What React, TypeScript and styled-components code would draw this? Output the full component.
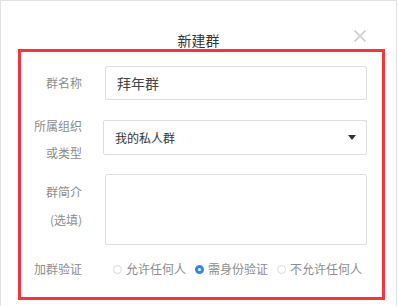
import styled, { createGlobalStyle } from 'styled-components';

const GlobalStyle = createGlobalStyle`
	html, body {
		margin: 0;
		padding: 0;
		background: #fff;
	}
	body {
		font-family: "Noto Sans CJK SC", "Noto Sans", sans-serif;
	}
`

const Modal = styled.div`
	box-sizing: border-box;
	width: 397px;
	height: 320px;
	border: 1px solid #e2e2e4;
	border-bottom: none;
	background: #fff;
`

const Header = styled.div`
	position: relative;
	height: 48px;
	padding-top: 26px;
	box-sizing: border-box;
	text-align: center;
`

const Title = styled.span`
	font-size: 14px;
	line-height: 20px;
	color: #333;
`

const Close = styled.button`
	position: absolute;
	top: 29px;
	right: 30px;
	width: 12px;
	height: 12px;
	padding: 0;
	border: none;
	background: none;
	display: flex;
	cursor: pointer;
`

const Form = styled.form`
	margin: 0 11px 0 17px;
	border: 3px solid #f5353b;
	padding: 0 15px 18px 0;
`

const Row = styled.div<{ $top: number; $align?: string }>`
	display: flex;
	align-items: ${p => p.$align || 'center'};
	margin-top: ${p => p.$top}px;
`

const Label = styled.div<{ $lh: number; $pt?: number }>`
	flex: 0 0 61px;
	margin-right: 23px;
	padding-top: ${p => p.$pt || 0}px;
	text-align: right;
	font-size: 12px;
	line-height: ${p => p.$lh}px;
	color: #8c8c8c;
`

const Field = styled.div`
	box-sizing: border-box;
	flex: 1;
	height: 34px;
	border: 1px solid #dedee2;
	border-radius: 2px;
	padding-left: 11px;
	display: flex;
	align-items: center;
`

const Input = styled.input`
	flex: 1;
	min-width: 0;
	margin: 0;
	padding: 0;
	border: none;
	background: transparent;
	font-family: inherit;
	font-size: 14px;
	color: #444;
	outline: none;
`

const Select = styled.div`
	box-sizing: border-box;
	flex: 1;
	height: 35px;
	margin: 8px 0 0 -2px;
	border: 1px solid #dedee2;
	border-radius: 2px;
	padding: 0 10px 0 11px;
	display: flex;
	align-items: center;
	justify-content: space-between;
	font-size: 12px;
	color: #333;
`

const TextArea = styled.textarea`
	box-sizing: border-box;
	flex: 1;
	height: 71px;
	margin: 0;
	border: 1px solid #dedee2;
	border-radius: 2px;
	resize: none;
	outline: none;
	font-family: inherit;
`

const RadioGroup = styled.div`
	display: flex;
	align-items: center;
	gap: 9px;
	padding-left: 8px;
`

const RadioItem = styled.label`
	display: flex;
	align-items: center;
	gap: 4px;
	font-size: 12px;
	line-height: 20px;
	color: #8c8c8c;
`

const Dot = styled.span<{ $on?: boolean }>`
	box-sizing: border-box;
	width: 9px;
	height: 9px;
	border-radius: 50%;
	border: ${p => (p.$on ? '3px solid #2f88ea' : '1px solid #dadada')};
	background: #fff;
`

const options = [
	{ label: '允许任何人', on: false },
	{ label: '需身份验证', on: true },
	{ label: '不允许任何人', on: false },
]

export default function App() {
	return (
		<>
			<GlobalStyle />
			<Modal>
				<Header>
					<Title>新建群</Title>
					<Close aria-label="关闭">
						<svg width="12" height="12" viewBox="0 0 12 12">
							<path d="M0.5 0.5 L11.5 11.5 M11.5 0.5 L0.5 11.5" stroke="#cfcfcf" strokeWidth="1.6" />
						</svg>
					</Close>
				</Header>
				<Form onSubmit={e => e.preventDefault()}>
					<Row $top={14}>
						<Label $lh={34}>群名称</Label>
						<Field>
							<Input defaultValue="拜年群" />
						</Field>
					</Row>
					<Row $top={12} $align="flex-start">
						<Label $lh={27}>所属组织<br />或类型</Label>
						<Select>
							<span>我的私人群</span>
							<svg width="8" height="5" viewBox="0 0 8 5">
								<path d="M0 0 H8 L4 5 Z" fill="#333" />
							</svg>
						</Select>
					</Row>
					<Row $top={8} $align="flex-start">
						<Label $lh={28} $pt={4}>群简介<br />(选填)</Label>
						<TextArea />
					</Row>
					<Row $top={14}>
						<Label $lh={20}>加群验证</Label>
						<RadioGroup>
							{options.map(o => (
								<RadioItem key={o.label}>
									<Dot $on={o.on} />
									{o.label}
								</RadioItem>
							))}
						</RadioGroup>
					</Row>
				</Form>
			</Modal>
		</>
	);
}
